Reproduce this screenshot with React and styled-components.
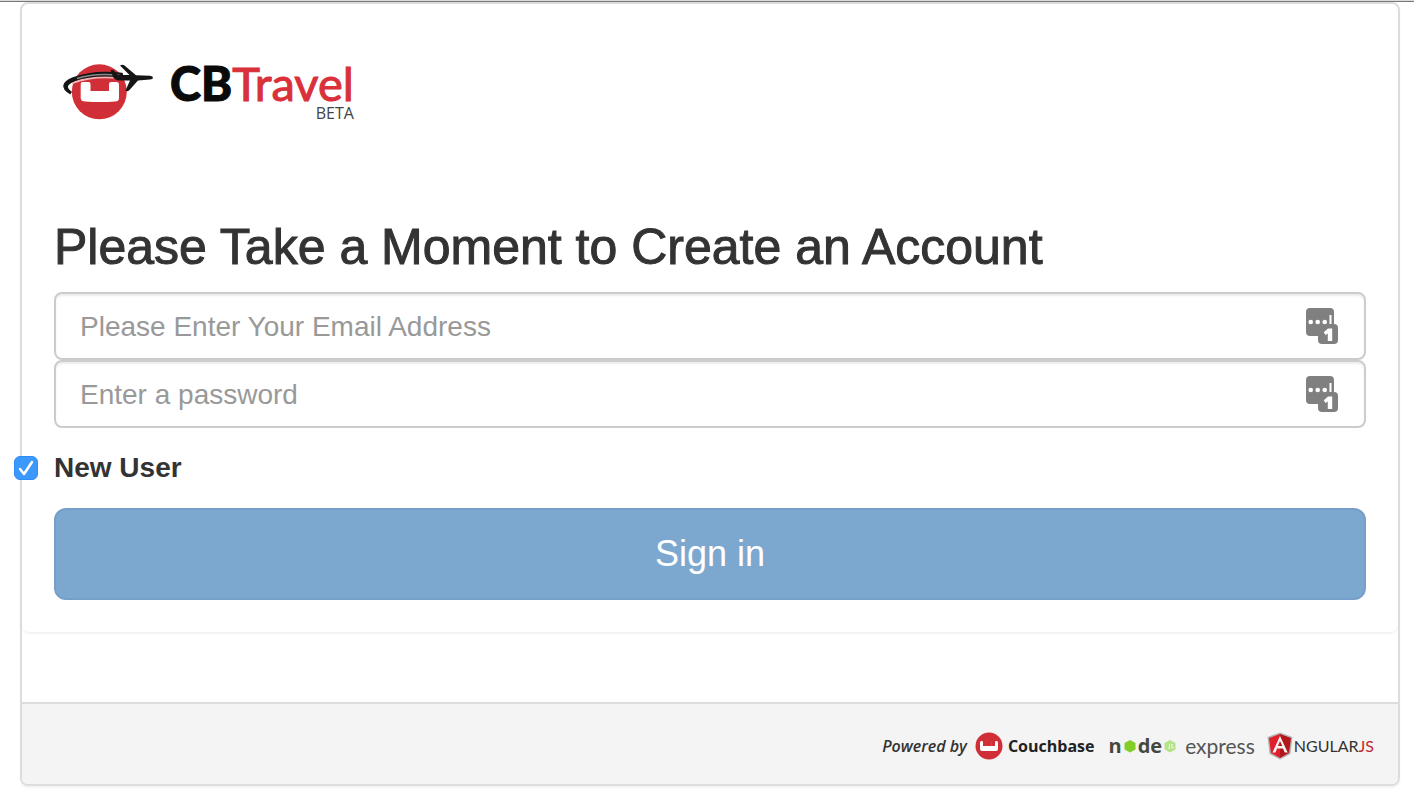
import React from "react";
import styled, { createGlobalStyle } from "styled-components";

const GlobalStyle = createGlobalStyle`
  *, *::before, *::after { box-sizing: border-box; }
  body {
    margin: 0;
    background: #fff;
    color: #333;
    font-family: "Helvetica Neue", Helvetica, "Liberation Sans", Arial, sans-serif;
    font-size: 28px;
    line-height: 40px;
  }
`;

const Page = styled.div`
  border-top: 1px solid #d9dcd9;
  box-shadow: inset 0 1px 0 #777;
  padding: 1px 14px 8px 20px;
`;

const Card = styled.main`
  border: 2px solid #ddd;
  border-radius: 8px;
  box-shadow: 0 2px 2px rgba(0, 0, 0, 0.05);
`;

const Panel = styled.form`
  padding: 56px 32px 32px;
  margin-bottom: 70px;
  border-radius: 8px;
  box-shadow: 0 2px 2px rgba(0, 0, 0, 0.05);
`;

const Brand = styled.div`
  display: flex;
  align-items: flex-start;
  gap: 14px;
  height: 162px;
  padding-left: 6px;
`;

const Wordmark = styled.div`
  display: flex;
  flex-direction: column;
  align-items: flex-end;
`;

const WordmarkName = styled.span`
  font-family: Lato, sans-serif;
  font-size: 47px;
  line-height: 46px;
  color: #d9303a;
  -webkit-text-stroke: 1px currentColor;
`;

const WordmarkBold = styled.b`
  font-weight: 900;
  color: #0a0a0a;
`;

const WordmarkTag = styled.span`
  font-family: "Open Sans", sans-serif;
  font-size: 16px;
  line-height: 14px;
  color: #444;
`;

const Title = styled.h1`
  margin: 0 0 20px;
  font-size: 50px;
  font-weight: 500;
  line-height: 50px;
  -webkit-text-stroke: 1px #333;
`;

const Field = styled.div`
  display: flex;
  align-items: center;
  height: 68px;
  padding: 0 26px 0 24px;
  border: 2px solid #ccc;
  border-radius: 8px;
  box-shadow: inset 0 2px 2px rgba(0, 0, 0, 0.075);
`;

const TextInput = styled.input`
  flex: 1;
  min-width: 0;
  padding: 2px 0 0;
  border: 0;
  outline: 0;
  background: transparent;
  color: #555;
  font: inherit;
  &::placeholder { color: #999; opacity: 1; }
`;

const CheckRow = styled.label`
  display: flex;
  align-items: center;
  gap: 16px;
  width: fit-content;
  margin: 20px 0 20px -40px;
  font-weight: 700;
`;

const CheckBox = styled.span`
  display: grid;
  > * { grid-area: 1 / 1; }
`;

const CheckInput = styled.input`
  appearance: none;
  width: 24px;
  height: 24px;
  margin: 0;
  border: 1px solid #aaa;
  border-radius: 6px;
  background: #fff;
  &:checked { border-color: #2f8bf5; background: #3b99fc; }
`;

const SignInButton = styled.button`
  display: block;
  width: 100%;
  height: 92px;
  padding: 0;
  border: 2px solid #759fc8;
  border-radius: 12px;
  background: #7ca8d0;
  color: #fff;
  font: inherit;
  font-size: 36px;
`;

const Footer = styled.footer`
  display: flex;
  align-items: center;
  justify-content: flex-end;
  height: 82px;
  padding: 4px 24px 0 0;
  border-top: 2px solid #ddd;
  border-radius: 0 0 6px 6px;
  background: #f4f4f4;
  line-height: 28px;
`;

const Powered = styled.span`
  margin-right: 8px;
  font-family: "Open Sans", sans-serif;
  font-size: 16px;
  font-style: italic;
  font-weight: 600;
`;

const Credit = styled.span`
  display: flex;
  align-items: center;
  gap: ${(p) => p.$gap || 0}px;
  margin-right: ${(p) => p.$after || 0}px;
  font-family: ${(p) => p.$face};
  font-size: ${(p) => p.$size}px;
  font-weight: ${(p) => p.$weight || 400};
  color: ${(p) => p.$color || "#333"};
`;

const RedText = styled.span`
  color: #c4272f;
`;

const GlobeLogo = () => (
  <svg width="96" height="64" viewBox="0 0 96 64" aria-hidden="true">
    <circle cx="39.3" cy="31.800" r="27.500" fill="#d12f37" />
    <path d="M22.500 22h6q2 0 2 2v7H49v-7q0-2 2-2h5.500q2.500 0 2.500 3v13q0 3.500-4 3.500-15 1-29.500 0-4.800 0-4.800-3.500V25q0-3 1.800-3z" fill="#fff" />
    <path d="M12 23Q35 14.500 62 18.500" fill="none" stroke="#f0b5b8" strokeWidth="2" />
    <path d="M10 33.500Q-3.500 25 13 18 34 10 62 13.500L63 17Q34 13.500 14.500 20.500 2 25.500 11 32z" fill="#151515" stroke="#151515" strokeWidth="1.400" />
    <path d="M17 18.500Q36 12.500 60 15.500" fill="none" stroke="#8a8a8a" strokeWidth="1.700" />
    <path d="M53 17l-2.500-7h3l4 5h12l-9.500-9.500q2.500-1.500 4.500 0L76 15.300l14 .500q3 .500 3 2t-3 1.800l-12 .800-9 10q-2 1.500-3.500 0l4.500-10H60q-5 0-7-3.400z" fill="#151515" />
  </svg>
);

const CouchbaseMark = () => (
  <svg width="28" height="28" viewBox="0 0 28 28" aria-hidden="true">
    <circle cx="14" cy="14" r="13.500" fill="#d12f37" />
    <path d="M6 9q2-.500 2 1v4h3V9.500h5.500V14H20v-4q0-1.500 2-1 1 .400 1 2v6q0 2-2 2H7q-2 0-2-2v-6q0-1.600 1-2z" fill="#fff" />
    <path d="M10.800 9h6v5h-6z" fill="#d12f37" />
  </svg>
);

const Hexagon = ({ light }) => (
  <svg width="14" height="14" viewBox="0 0 14 14" aria-hidden="true">
    <path d="M7 1l5.500 3v6.500L7 13.500 1.500 10.500V4z" fill={light ? "#b5e389" : "#83cd29"} />
    {light && <path d="M6.500 5v4.500L5 9M10 5.500H8.500v1.500l1.500.500V9H8" fill="none" stroke="#e8f5dc" />}
  </svg>
);

const AngularShield = () => (
  <svg width="26" height="28" viewBox="0 0 26 28" aria-hidden="true">
    <path d="M13 .500L.500 5l2 17L13 27.500 23.500 22l2-17z" fill="#b3b3b3" />
    <path d="M13 2L2 6l2 15 9 5z" fill="#e01f2d" />
    <path d="M13 2l11 4-2 15-9 5z" fill="#b3151c" />
    <path d="M13 4L5.500 20.500h3l1.500-4h6l1.700 4h3zM13 9l2.300 5h-4.500z" fill="#f4f4f4" fillRule="evenodd" />
  </svg>
);

const PasswordManagerIcon = () => (
  <svg width="32" height="36" viewBox="0 0 32 36" aria-hidden="true">
    <rect width="28" height="28" rx="4" fill="#808080" />
    <rect x="12" y="16" width="20" height="20" rx="4" fill="#808080" />
    <g fill="#fff">
      <circle cx="4.700" cy="14" r="2.300" />
      <circle cx="11.700" cy="14" r="2.300" />
      <circle cx="18.700" cy="14" r="2.300" />
      <path d="M23.500 7h2v9h-2z" />
      <path d="M22 20.500h4.200V33h-4.400v-7.500l-2.300 1.500-1.700-2.800z" />
    </g>
  </svg>
);

export default function App() {
  return (
    <>
      <GlobalStyle />
      <Page>
        <Card>
          <Panel onSubmit={(e) => e.preventDefault()}>
            <Brand>
              <GlobeLogo />
              <Wordmark>
                <WordmarkName><WordmarkBold>CB</WordmarkBold>Travel</WordmarkName>
                <WordmarkTag>BETA</WordmarkTag>
              </Wordmark>
            </Brand>
            <Title>Please Take a Moment to Create an Account</Title>
            <Field>
              <TextInput type="email" aria-label="Email address" placeholder="Please Enter Your Email Address" />
              <PasswordManagerIcon />
            </Field>
            <Field>
              <TextInput type="password" aria-label="Password" placeholder="Enter a password" />
              <PasswordManagerIcon />
            </Field>
            <CheckRow>
              <CheckBox>
                <CheckInput type="checkbox" defaultChecked />
                <svg width="24" height="24" viewBox="0 0 24 24" pointerEvents="none" aria-hidden="true">
                  <path d="M6 13l4 5 8-12" fill="none" stroke="#fff" strokeWidth="2.500" strokeLinecap="round" strokeLinejoin="round" />
                </svg>
              </CheckBox>
              New User
            </CheckRow>
            <SignInButton type="submit">Sign in</SignInButton>
          </Panel>
          <Footer>
            <Powered>Powered by</Powered>
            <Credit $face='"Open Sans", sans-serif' $size={16} $weight={700} $color="#222" $gap={5} $after={14}>
              <CouchbaseMark />Couchbase
            </Credit>
            <Credit $face='"Open Sans", sans-serif' $size={20} $weight={700} $color="#46483e" $gap={1} $after={8}>
              n<Hexagon />de<Hexagon light />
            </Credit>
            <Credit $face="Lato, sans-serif" $size={21} $color="#555" $after={12}>express</Credit>
            <Credit $face="Lato, sans-serif" $size={16} $gap={1}>
              <AngularShield /><span>NGULAR<RedText>JS</RedText></span>
            </Credit>
          </Footer>
        </Card>
      </Page>
    </>
  );
}
